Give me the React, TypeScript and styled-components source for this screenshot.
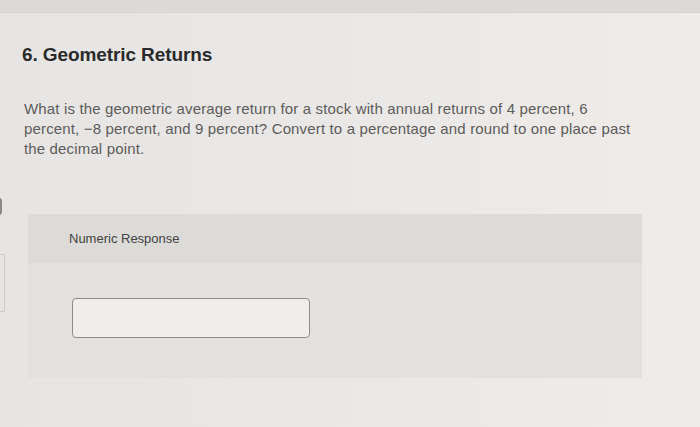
import React from "react";
import styled, { createGlobalStyle } from "styled-components";

const GlobalStyle = createGlobalStyle`
  html, body {
    margin: 0;
    padding: 0;
    background: #e9e7e5;
  }
  body {
    font-family: "Liberation Sans", Arial, sans-serif;
  }
`;

const App: React.FC = () => {
  return (
    <Page>
      <GlobalStyle />
      <TopBar />
      <EdgeTab />
      <EdgeBox />
      <Content>
        <Title>6. Geometric Returns</Title>
        <Question>
          What is the geometric average return for a stock with annual returns of 4 percent, 6
          <br />
          percent, −8 percent, and 9 percent? Convert to a percentage and round to one place past
          <br />
          the decimal point.
        </Question>
        <Response>
          <ResponseHeader>
            <span>Numeric Response</span>
          </ResponseHeader>
          <ResponseBody>
            <AnswerInput type="text" />
          </ResponseBody>
        </Response>
      </Content>
    </Page>
  );
};

const Page = styled.div`
  position: relative;
  width: 700px;
  height: 427px;
  overflow: hidden;
  background: linear-gradient(90deg, #e7e5e3 0%, #ebe9e7 60%, #efebe9 100%);
  display: flex;
  flex-direction: column;
`;

const TopBar = styled.div`
  height: 12px;
  background: #dcd9d6;
  border-bottom: 1px solid #d6d3d0;
`;

const EdgeTab = styled.div`
  position: absolute;
  left: -4px;
  top: 198px;
  width: 6px;
  height: 17px;
  border-radius: 3px;
  background: #8a8887;
`;

const EdgeBox = styled.div`
  position: absolute;
  left: -4px;
  top: 254px;
  width: 7px;
  height: 56px;
  border: 1px solid #cfcdcb;
  border-radius: 2px;
`;

const Content = styled.div`
  display: flex;
  flex-direction: column;
  padding: 31px 0 0 22px;
`;

const Title = styled.h2`
  margin: 0;
  font-size: 19px;
  line-height: 22px;
  font-weight: 700;
  color: #2a2a2a;
  letter-spacing: -0.1px;
`;

const Question = styled.p`
  margin: 33px 0 0 2px;
  font-size: 15px;
  line-height: 20px;
  color: #5d5c5b;
  letter-spacing: 0.15px;
`;

const Response = styled.div`
  margin: 55px 0 0 6px;
  width: 614px;
  height: 164px;
  background: #e2e1de;
  display: flex;
  flex-direction: column;
`;

const ResponseHeader = styled.div`
  height: 49px;
  background: #dcdbd8;
  display: flex;
  align-items: center;
  padding-left: 41px;
  span {
    font-size: 13px;
    color: #444343;
    letter-spacing: 0;
  }
`;

const ResponseBody = styled.div`
  padding: 35px 0 0 44px;
`;

const AnswerInput = styled.input`
  box-sizing: border-box;
  width: 238px;
  height: 40px;
  background: #efeeec;
  border: 1px solid #8e8d8b;
  border-radius: 4px;
  outline: none;
`;

export default App;
